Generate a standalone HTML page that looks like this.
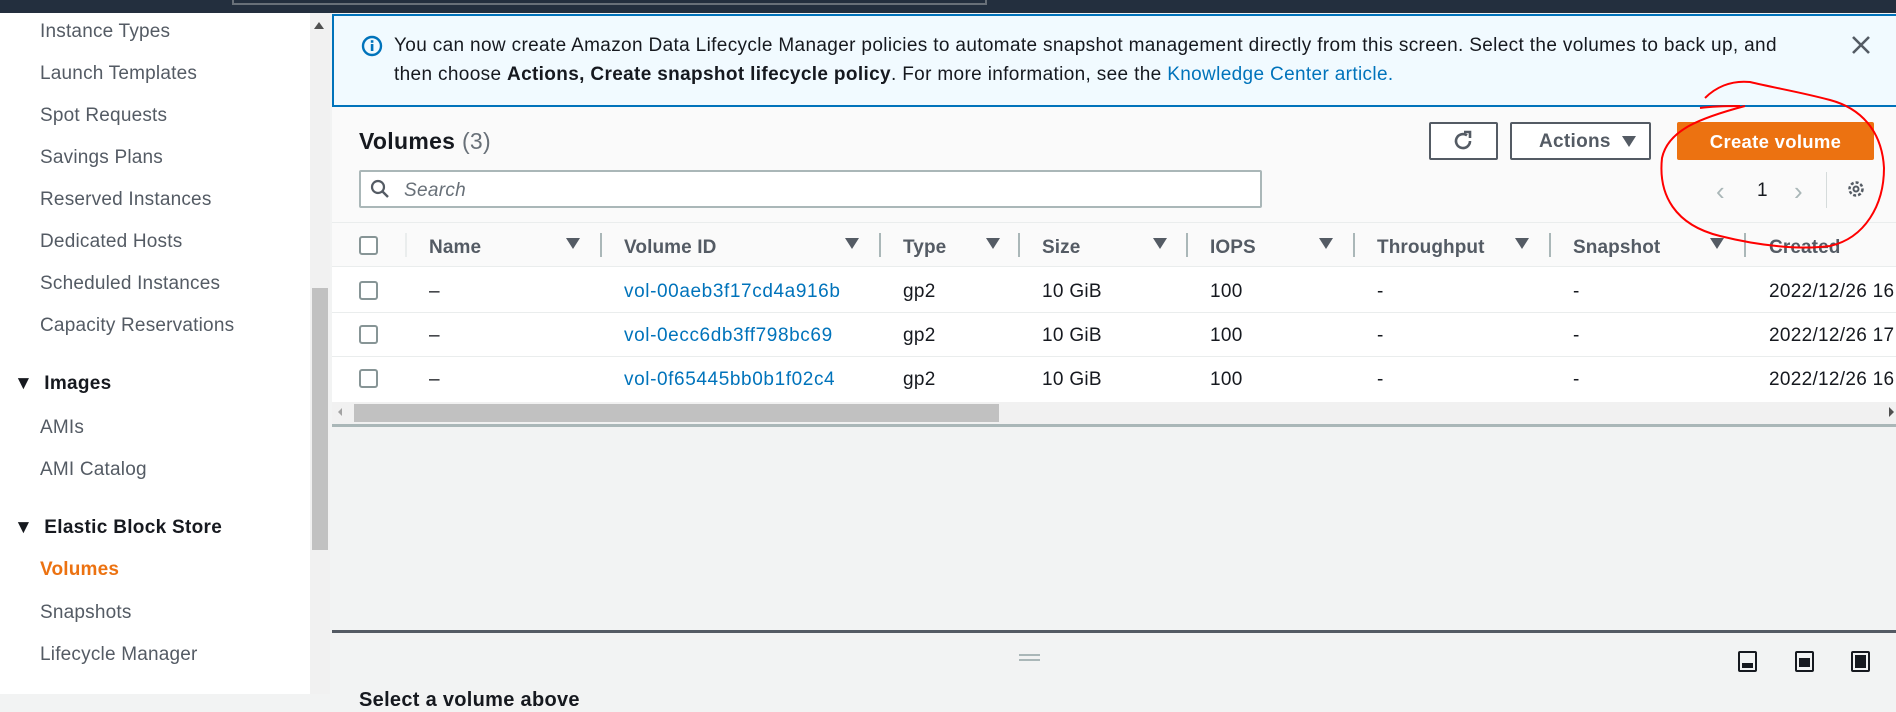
<!DOCTYPE html>
<html><head><meta charset="utf-8"><style>
*{box-sizing:border-box;margin:0;padding:0}
body{width:1896px;height:694px;overflow:hidden;position:relative;background:#f2f3f3;font-family:"Liberation Sans",sans-serif;color:#16191f;font-size:19px;letter-spacing:0.3px}
.a{position:absolute;white-space:nowrap}
.nav{color:#545b64;font-size:19px;left:40px;letter-spacing:0.2px}
.top{left:0;top:0;width:1896px;height:13px;background:#232f3e}
.side{left:0;top:13px;width:310px;height:681px;background:#fff}
.sb{left:310px;top:13px;width:20px;height:681px;background:#f1f1f1}
.th{top:237px;font-weight:bold;color:#545b64;font-size:19px;letter-spacing:0.1px}
.fl{top:238px;width:0;height:0;border-left:7px solid transparent;border-right:7px solid transparent;border-top:11px solid #545b64}
.sep{top:233px;width:2px;height:24px;background:#aab7b8}
.cb{width:19px;height:19px;border:2px solid #879596;border-radius:3px;background:#fff}
.td{font-size:19px;color:#16191f}
.lk{color:#0073bb;letter-spacing:0.6px}
</style></head><body>
<div class="a top"></div>
<div class="a" style="left:232px;top:0;width:755px;height:5px;border:2px solid #687078;border-top:none"></div>
<div class="a side"></div>
<div class="a sb"></div>
<div class="a" style="left:312px;top:288px;width:16px;height:262px;background:#c1c1c1"></div>
<div class="a" style="left:314px;top:22px;width:0;height:0;border-left:5px solid transparent;border-right:5px solid transparent;border-bottom:7px solid #505050"></div>

<div class="a nav" style="top:21px">Instance Types</div>
<div class="a nav" style="top:63px">Launch Templates</div>
<div class="a nav" style="top:105px">Spot Requests</div>
<div class="a nav" style="top:147px">Savings Plans</div>
<div class="a nav" style="top:189px">Reserved Instances</div>
<div class="a nav" style="top:231px">Dedicated Hosts</div>
<div class="a nav" style="top:273px">Scheduled Instances</div>
<div class="a nav" style="top:315px">Capacity Reservations</div>
<div class="a" style="left:14px;top:373px;font-weight:bold;font-size:19px;color:#16191f">▼&nbsp; Images</div>
<div class="a nav" style="top:417px">AMIs</div>
<div class="a nav" style="top:459px">AMI Catalog</div>
<div class="a" style="left:14px;top:517px;font-weight:bold;font-size:19px;color:#16191f">▼&nbsp; Elastic Block Store</div>
<div class="a nav" style="top:559px;color:#ec7211;font-weight:bold">Volumes</div>
<div class="a nav" style="top:602px">Snapshots</div>
<div class="a nav" style="top:644px">Lifecycle Manager</div>

<div class="a" style="left:332px;top:106px;width:1564px;height:320px;background:#fafafa"></div>
<div class="a" style="left:332px;top:14px;width:1564px;height:93px;background:#f1faff;border:2px solid #0073bb;border-right:none"></div>
<svg class="a" style="left:361px;top:35px" width="22" height="22" viewBox="0 0 22 22"><circle cx="11" cy="11" r="9" fill="none" stroke="#0073bb" stroke-width="2.4"/><rect x="9.8" y="9" width="2.6" height="7" fill="#0073bb"/><rect x="9.8" y="5.2" width="2.6" height="2.6" fill="#0073bb"/></svg>
<div class="a" style="left:394px;top:35px;font-size:19px;letter-spacing:0.35px">You can now create Amazon Data Lifecycle Manager policies to automate snapshot management directly from this screen. Select the volumes to back up, and</div>
<div class="a" style="left:394px;top:64px;font-size:19px;letter-spacing:0.35px">then choose <b>Actions, Create snapshot lifecycle policy</b>. For more information, see the <span style="color:#0073bb">Knowledge Center article.</span></div>
<svg class="a" style="left:1851px;top:35px" width="20" height="20"><path d="M2 2L18 18M18 2L2 18" stroke="#545b64" stroke-width="2.6"/></svg>

<div class="a" style="left:359px;top:128px;font-size:23px;font-weight:bold">Volumes <span style="font-weight:normal;color:#687078">(3)</span></div>
<div class="a" style="left:1429px;top:122px;width:69px;height:38px;border:2px solid #545b64;border-radius:2px;background:#fff"></div>
<svg class="a" style="left:1451px;top:129px" width="24" height="24" viewBox="0 0 24 24"><path d="M19 12a7 7 0 1 1-3-5.7" fill="none" stroke="#545b64" stroke-width="2.6"/><path d="M13 3h6v6" fill="none" stroke="#545b64" stroke-width="2.6"/></svg>
<div class="a" style="left:1510px;top:122px;width:141px;height:38px;border:2px solid #545b64;border-radius:2px;background:#fff"></div>
<div class="a" style="left:1539px;top:131px;font-weight:bold;color:#545b64;font-size:19px">Actions</div>
<div class="a" style="left:1622px;top:136px;width:0;height:0;border-left:7px solid transparent;border-right:7px solid transparent;border-top:11px solid #545b64"></div>
<div class="a" style="left:1677px;top:122px;width:197px;height:38px;background:#ec7211;border-radius:2px;color:#fff;font-weight:bold;text-align:center;line-height:40px;font-size:18.5px">Create volume</div>
<div class="a" style="left:1716px;top:176px;color:#aab7b8;font-size:26px">‹</div>
<div class="a" style="left:1757px;top:180px;font-size:19px">1</div>
<div class="a" style="left:1794px;top:176px;color:#aab7b8;font-size:26px">›</div>
<div class="a" style="left:1826px;top:172px;width:1px;height:36px;background:#d5dbdb"></div>
<svg class="a" style="left:1845px;top:178px" width="22" height="22" viewBox="0 0 22 22"><circle cx="11" cy="11" r="6.5" fill="none" stroke="#545b64" stroke-width="2.5" stroke-dasharray="3 2"/><circle cx="11" cy="11" r="2.5" fill="none" stroke="#545b64" stroke-width="2"/></svg>

<div class="a" style="left:359px;top:170px;width:903px;height:38px;border:2px solid #aab7b8;border-radius:2px;background:#fff"></div>
<svg class="a" style="left:370px;top:179px" width="20" height="20"><circle cx="8" cy="8" r="6" fill="none" stroke="#545b64" stroke-width="2.2"/><path d="M12.5 12.5L18 18" stroke="#545b64" stroke-width="2.4"/></svg>
<div class="a" style="left:404px;top:180px;font-style:italic;color:#687078;font-size:19px">Search</div>

<div class="a" style="left:332px;top:222px;width:1564px;height:45px;background:#fafafa;border-top:1px solid #eaeded;border-bottom:1px solid #eaeded"></div>
<div class="a" style="left:332px;top:267px;width:1564px;height:135px;background:#fff"></div>
<div class="a" style="left:332px;top:312px;width:1564px;height:1px;background:#eaeded"></div>
<div class="a" style="left:332px;top:356px;width:1564px;height:1px;background:#eaeded"></div>
<div class="a cb" style="left:359px;top:236px"></div>
<div class="a cb" style="left:359px;top:281px"></div>
<div class="a cb" style="left:359px;top:325px"></div>
<div class="a cb" style="left:359px;top:369px"></div>
<div class="a sep" style="left:405px;background:#eaeded"></div>
<div class="a th" style="left:429px">Name</div><div class="a fl" style="left:566px"></div><div class="a sep" style="left:600px"></div>
<div class="a th" style="left:624px">Volume ID</div><div class="a fl" style="left:845px"></div><div class="a sep" style="left:879px"></div>
<div class="a th" style="left:903px">Type</div><div class="a fl" style="left:986px"></div><div class="a sep" style="left:1018px"></div>
<div class="a th" style="left:1042px">Size</div><div class="a fl" style="left:1153px"></div><div class="a sep" style="left:1186px"></div>
<div class="a th" style="left:1210px">IOPS</div><div class="a fl" style="left:1319px"></div><div class="a sep" style="left:1353px"></div>
<div class="a th" style="left:1377px">Throughput</div><div class="a fl" style="left:1515px"></div><div class="a sep" style="left:1549px"></div>
<div class="a th" style="left:1573px">Snapshot</div><div class="a fl" style="left:1710px"></div><div class="a sep" style="left:1744px"></div>
<div class="a th" style="left:1769px">Created</div>

<div class="a td" style="left:429px;top:281px">–</div><div class="a td lk" style="left:624px;top:281px">vol-00aeb3f17cd4a916b</div><div class="a td" style="left:903px;top:281px">gp2</div><div class="a td" style="left:1042px;top:281px">10 GiB</div><div class="a td" style="left:1210px;top:281px">100</div><div class="a td" style="left:1377px;top:281px">-</div><div class="a td" style="left:1573px;top:281px">-</div><div class="a td" style="left:1769px;top:281px">2022/12/26 16</div>
<div class="a td" style="left:429px;top:325px">–</div><div class="a td lk" style="left:624px;top:325px">vol-0ecc6db3ff798bc69</div><div class="a td" style="left:903px;top:325px">gp2</div><div class="a td" style="left:1042px;top:325px">10 GiB</div><div class="a td" style="left:1210px;top:325px">100</div><div class="a td" style="left:1377px;top:325px">-</div><div class="a td" style="left:1573px;top:325px">-</div><div class="a td" style="left:1769px;top:325px">2022/12/26 17</div>
<div class="a td" style="left:429px;top:369px">–</div><div class="a td lk" style="left:624px;top:369px">vol-0f65445bb0b1f02c4</div><div class="a td" style="left:903px;top:369px">gp2</div><div class="a td" style="left:1042px;top:369px">10 GiB</div><div class="a td" style="left:1210px;top:369px">100</div><div class="a td" style="left:1377px;top:369px">-</div><div class="a td" style="left:1573px;top:369px">-</div><div class="a td" style="left:1769px;top:369px">2022/12/26 16</div>

<div class="a" style="left:332px;top:402px;width:1564px;height:22px;background:#f1f1f1"></div>
<div class="a" style="left:354px;top:404px;width:645px;height:18px;background:#c1c1c1"></div>
<div class="a" style="left:338px;top:408px;width:0;height:0;border-top:4px solid transparent;border-bottom:4px solid transparent;border-right:4px solid #a3a3a3"></div>
<div class="a" style="left:1889px;top:407px;width:0;height:0;border-top:5px solid transparent;border-bottom:5px solid transparent;border-left:5px solid #505050"></div>
<div class="a" style="left:332px;top:424px;width:1564px;height:3px;background:#aab7b8"></div>
<div class="a" style="left:332px;top:630px;width:1564px;height:3px;background:#545b64"></div>
<div class="a" style="left:332px;top:633px;width:1564px;height:61px;background:#f2f3f3"></div>
<div class="a" style="left:1019px;top:654px;width:21px;height:2px;background:#aab7b8"></div>
<div class="a" style="left:1019px;top:659px;width:21px;height:2px;background:#aab7b8"></div>
<div class="a" style="left:1738px;top:651px;width:19px;height:21px;border:2px solid #16191f;border-radius:2px"><div style="position:absolute;left:2px;right:2px;bottom:2px;height:5px;background:#16191f"></div></div>
<div class="a" style="left:1795px;top:651px;width:19px;height:21px;border:2px solid #16191f;border-radius:2px"><div style="position:absolute;left:2px;right:2px;top:5px;height:9px;background:#16191f"></div></div>
<div class="a" style="left:1851px;top:651px;width:19px;height:21px;border:2px solid #16191f;border-radius:2px"><div style="position:absolute;left:2px;right:2px;top:2px;bottom:2px;background:#16191f"></div></div>
<div class="a" style="left:359px;top:689px;font-weight:bold;font-size:20px">Select a volume above</div>

<svg class="a" style="left:0;top:0" width="1896" height="694"><path d="M1745 106 C1700 118 1668 130 1662 158 C1658 195 1675 225 1720 236 C1760 246 1800 250 1830 246 C1865 238 1884 205 1884 168 C1882 130 1860 108 1830 100 C1800 92 1775 88 1750 82 C1730 80 1715 88 1705 98 M1700 108 C1715 106 1730 106 1740 106" fill="none" stroke="#f00" stroke-width="2"/></svg>
</body></html>
